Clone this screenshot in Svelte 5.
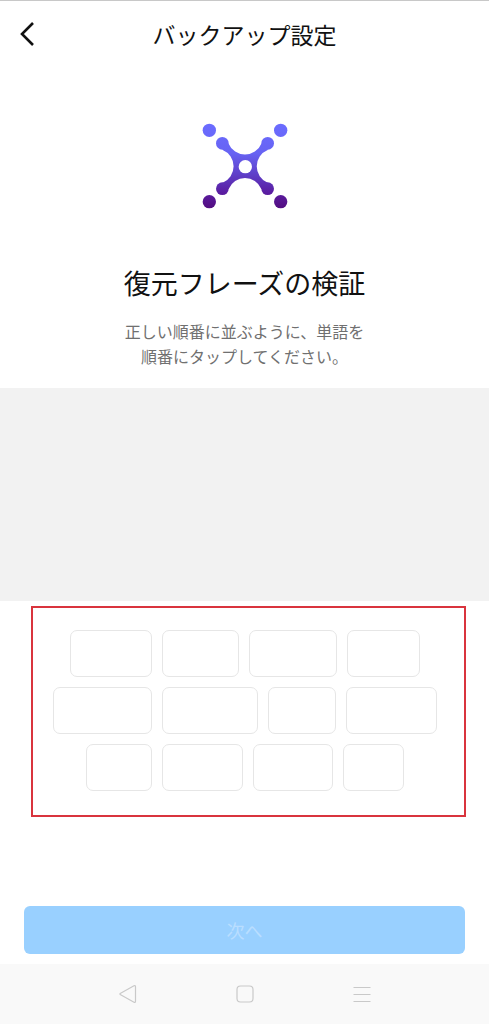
<script>
  // Relative widths of the word chips, row by row
  const rows = [
    [82, 77, 88, 73],
    [99, 96, 68, 91],
    [66, 81, 80, 61]
  ];
</script>

<div class="screen">
  <header>
    <button class="back" aria-label="戻る">
      <svg width="16" height="26" viewBox="0 0 16 26" fill="none" stroke="#111" stroke-width="2.6">
        <path d="M14 2 3 13 14 24" />
      </svg>
    </button>
    <h1>バックアップ設定</h1>
  </header>

  <main>
    <section class="intro">
      <svg class="logo" width="110" height="110" viewBox="0 0 330 330" aria-hidden="true">
        <defs>
          <linearGradient id="violet" gradientUnits="userSpaceOnUse" x1="0" y1="41" x2="0" y2="295">
            <stop offset="0" stop-color="#6b6cff" />
            <stop offset="0.35" stop-color="#6763f3" />
            <stop offset="0.6" stop-color="#5f3fc8" />
            <stop offset="0.82" stop-color="#5a1ca0" />
            <stop offset="1" stop-color="#530d80" />
          </linearGradient>
        </defs>
        <g fill="url(#violet)">
          <circle cx="58" cy="61" r="20" />
          <circle cx="272" cy="61" r="20" />
          <circle cx="58" cy="275" r="20" />
          <circle cx="272" cy="275" r="20" />
          <circle cx="97" cy="100" r="19" />
          <circle cx="233" cy="100" r="19" />
          <circle cx="97" cy="236" r="19" />
          <circle cx="233" cy="236" r="19" />
          <path d="M116 101A53 53 0 0 0 214 101L233 100 233 120A53 53 0 0 0 233 218L233 236 214 237A53 53 0 0 0 116 237L97 236 98 218A53 53 0 0 0 98 120L97 100Z" />
        </g>
        <circle cx="166" cy="170" r="20" fill="#fff" />
      </svg>
      <h2>復元フレーズの検証</h2>
      <p>正しい順番に並ぶように、単語を<br />順番にタップしてください。</p>
    </section>

    <section class="answer" aria-label="選択した単語"></section>

    <section class="words" aria-label="単語">
      {#each rows as row, r}
        <div class="row">
          {#each row as width, c}
            <button class="chip" style="width: {width}px" aria-label="単語 {r * 4 + c + 1}"></button>
          {/each}
        </div>
      {/each}
    </section>

    <div class="action">
      <button class="next" disabled>次へ</button>
    </div>
  </main>

  <nav>
    <button aria-label="戻る">
      <svg width="20" height="20" viewBox="0 0 20 20">
        <path d="M16 1.8 2.6 9.2Q1.2 10 2.6 10.8L16 18.2Q17.5 18.8 17.5 17.2V2.8Q17.5 1.2 16 1.8Z" />
      </svg>
    </button>
    <button aria-label="ホーム">
      <svg width="20" height="20" viewBox="0 0 20 20">
        <rect x="2" y="2" width="16" height="16" rx="3.5" />
      </svg>
    </button>
    <button aria-label="メニュー">
      <svg width="20" height="20" viewBox="0 0 20 20">
        <path d="M1.500 3.500H18.500M1.500 10.500H18.500M1.500 17.500H18.500" />
      </svg>
    </button>
  </nav>
</div>

<style>
  :global(body) {
    margin: 0;
    background: #fff;
  }
  .screen {
    box-sizing: border-box;
    display: flex;
    flex-direction: column;
    min-height: 100vh;
    border-top: 1px solid #c8c8c8;
    color: #111;
    font-family: "Noto Sans CJK JP", sans-serif;
  }
  button {
    padding: 0;
    border: 0;
    background: none;
    font: inherit;
  }
  svg {
    display: block;
  }
  h1,
  h2,
  p {
    margin: 0;
    font-weight: 400;
  }
  header {
    display: grid;
    grid-template-columns: 48px 1fr 48px;
    align-items: center;
    height: 66px;
  }
  .back {
    display: flex;
    padding-left: 19px;
  }
  h1 {
    font-size: 23px;
    line-height: 32px;
    text-align: center;
  }
  main {
    display: flex;
    flex: 1;
    flex-direction: column;
  }
  .intro {
    display: flex;
    flex-direction: column;
    align-items: center;
    padding: 43px 24px 19px;
    text-align: center;
  }
  h2 {
    margin-top: 43px;
    font-size: 27px;
    line-height: 40px;
  }
  p {
    margin-top: 16px;
    color: #707070;
    font-size: 16px;
    line-height: 25px;
  }
  .answer {
    height: 213px;
    background: #f2f2f2;
  }
  .words {
    display: flex;
    flex-direction: column;
    gap: 10px;
    margin: 5px 23px 0 31px;
    padding: 22px 8px 24px 0;
    border: 2px solid #d9343d;
  }
  .row {
    display: flex;
    justify-content: center;
    gap: 10px;
  }
  .chip {
    height: 47px;
    border: 1px solid #e6e6e6;
    border-radius: 7px;
    background: #fff;
  }
  .action {
    margin-top: auto;
    padding: 24px 24px 10px;
  }
  .next {
    width: 100%;
    height: 48px;
    border-radius: 6px;
    background: #99d0ff;
    color: #b9deff;
    font-size: 18px;
  }
  nav {
    display: flex;
    justify-content: center;
    gap: 97px;
    padding: 20px 0;
    background: #f9f9f9;
  }
  nav svg {
    fill: none;
    stroke: #c9c9c9;
    stroke-width: 1.2;
  }
</style>
